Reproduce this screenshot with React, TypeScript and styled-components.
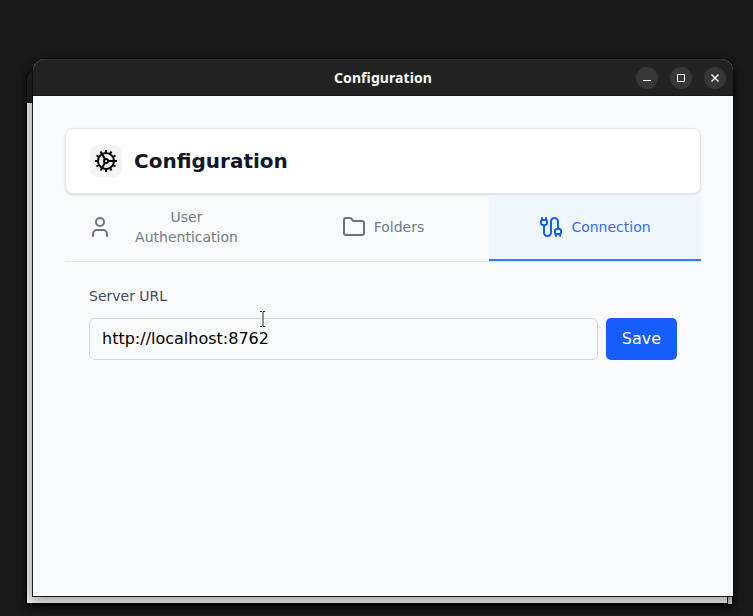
import React from "react";
import styled, { createGlobalStyle } from "styled-components";
import { Cable, Folder, User } from "lucide-react";

const GlobalStyle = createGlobalStyle`
  *, *::before, *::after { box-sizing: border-box; }
  body { margin: 0; background: #1b1b1b; overflow: hidden; }
  button, input { font: inherit; }
`;

const Desktop = styled.main`
  position: relative;
  width: 753px;
  height: 616px;
  overflow: hidden;
  background: #1b1b1b;
  font-family: "DejaVu Sans", sans-serif;
`;

const BackWindow = styled.div<{ $left: number; $width: number; $bottom: number }>`
  position: absolute;
  left: ${(p) => p.$left}px;
  top: 68px;
  width: ${(p) => p.$width}px;
  bottom: ${(p) => p.$bottom}px;
  border-radius: 12px 12px 0 0;
  background: linear-gradient(#202020 35px, #f4f4f4 35px);
  box-shadow: 0 0 0 1px #050505, 0 3px 10px 2px rgba(0, 0, 0, 0.45);
`;

const Window = styled.section`
  position: absolute;
  left: 33px;
  top: 59px;
  width: 700px;
  height: 537px;
  display: flex;
  flex-direction: column;
  border-radius: 12px 12px 0 0;
  background: #f9fafb;
  box-shadow: 0 0 0 1px rgba(12, 12, 16, 0.9), 0 3px 14px 3px rgba(0, 0, 0, 0.35);
`;

const TitleBar = styled.header`
  display: grid;
  grid-template-columns: 1fr auto 1fr;
  align-items: center;
  flex: none;
  height: 37px;
  padding-right: 7px;
  padding-left: 7px;
  border-radius: 12px 12px 0 0;
  background: #222;
  box-shadow: inset 0 1px #333, inset 0 -1px #1a1a1a;
`;

const WindowTitle = styled.span`
  grid-column: 2;
  color: #f7f7f7;
  font: 700 14px/20px "Noto Sans", sans-serif;
  letter-spacing: 0.08px;
`;

const WindowControls = styled.div`
  display: flex;
  justify-content: flex-end;
  gap: 12px;
`;

const ControlButton = styled.button`
  display: grid;
  place-items: center;
  width: 22px;
  height: 22px;
  padding: 0;
  border: 0;
  border-radius: 50%;
  background: #373737;
  color: #fff;
`;

const Page = styled.div`
  flex: 1;
  padding: 32px;
  background: #f9fafc;
`;

const PageHeader = styled.div`
  display: flex;
  align-items: center;
  gap: 12px;
  height: 66px;
  padding: 0 24px;
  border: 1px solid #e5e7eb;
  border-radius: 8px;
  background: #fff;
  box-shadow: 0 1px 0 #e3e4e8, 0 1px 3px rgba(0, 0, 0, 0.1), 0 1px 2px -1px rgba(0, 0, 0, 0.1);
`;

const IconTile = styled.div`
  display: grid;
  place-items: center;
  width: 32px;
  height: 32px;
  border-radius: 8px;
  background: #f3f4f6;
  color: #000;
`;

const Heading = styled.h1`
  margin: 0;
  color: #101828;
  font-size: 20px;
  line-height: 28px;
  font-weight: 700;
`;

const Tabs = styled.nav`
  display: grid;
  grid-template-columns: repeat(3, 1fr);
  height: 67px;
  margin-top: 1px;
  border-bottom: 1px solid #e5e7eb;
`;

const Tab = styled.button<{ $active?: boolean }>`
  display: flex;
  align-items: center;
  justify-content: center;
  gap: 8px;
  padding: 0 24px;
  border: 0;
  border-bottom: 2px solid ${(p) => (p.$active ? "#2b7fff" : "transparent")};
  background: ${(p) => (p.$active ? "#eff6ff" : "transparent")};
  color: ${(p) => (p.$active ? "#155dfc" : "#6a7282")};
  font-size: 14px;
  line-height: 20px;
  svg { flex: none; }

  &:first-child {
    gap: 9px;
    padding: 0 25px 0 23px;
  }
`;

const TabLabel = styled.span<{ $active?: boolean }>`
  color: ${(p) => (p.$active ? "#3a6cfa" : "#747b87")};
`;

const Form = styled.form`
  padding: 24px;
`;

const Label = styled.label`
  display: block;
  margin-bottom: 12px;
  color: #434c5b;
  font-size: 14px;
  line-height: 20px;
`;

const FieldRow = styled.div`
  display: flex;
  gap: 8px;
`;

const TextInput = styled.input`
  flex: 1;
  min-width: 0;
  height: 42px;
  padding: 7px 12px 9px;
  border: 1px solid #d1d5dc;
  border-radius: 6px;
  outline: 0;
  background: transparent;
  color: #000;
  font-size: 16px;
  line-height: 24px;
`;

const SaveButton = styled.button`
  width: 71px;
  height: 42px;
  padding: 0;
  border: 0;
  border-radius: 5px;
  background: #155dfc;
  color: #fff;
  font-size: 16px;
  line-height: 24px;
`;

const TextCursor = styled.svg`
  position: absolute;
  left: 258px;
  top: 310px;
`;

const TOOTH_ANGLES = [0, 30, 60, 90, 120, 150, 180, 210, 240, 270, 300, 330];
const SPOKE_ANGLES = [0, 120, 240];

function GearIcon() {
  return (
    <svg width="24" height="24" viewBox="0 0 24 24" fill="none" stroke="currentColor" strokeWidth="2">
      <circle cx="12" cy="12" r="8" />
      <circle cx="12" cy="12" r="2" />
      {TOOTH_ANGLES.map((angle) => (
        <path key={angle} d="M20 12h3" transform={`rotate(${angle} 12 12)`} />
      ))}
      {SPOKE_ANGLES.map((angle) => (
        <path key={angle} d="M14 12h6" transform={`rotate(${angle} 12 12)`} />
      ))}
    </svg>
  );
}

export default function App() {
  return (
    <>
      <GlobalStyle />
      <Desktop>
        <BackWindow $left={33} $width={699} $bottom={12} />
        <BackWindow $left={27} $width={700} $bottom={13} />
        <Window>
          <TitleBar>
            <WindowTitle>Configuration</WindowTitle>
            <WindowControls>
              <ControlButton aria-label="Minimize">
                <svg width="10" height="10" viewBox="0 0 10 10">
                  <path d="M1 7.5h8" stroke="currentColor" />
                </svg>
              </ControlButton>
              <ControlButton aria-label="Maximize">
                <svg width="8" height="8" viewBox="0 0 8 8">
                  <path d="M.5.5h7v7h-7z" fill="none" stroke="currentColor" />
                </svg>
              </ControlButton>
              <ControlButton aria-label="Close">
                <svg width="8" height="8" viewBox="0 0 8 8">
                  <path d="M.5.5l7 7m0-7l-7 7" stroke="currentColor" strokeWidth="1.4" />
                </svg>
              </ControlButton>
            </WindowControls>
          </TitleBar>
          <Page>
            <PageHeader>
              <IconTile>
                <GearIcon />
              </IconTile>
              <Heading>Configuration</Heading>
            </PageHeader>
            <Tabs>
              <Tab>
                <User size={24} />
                <TabLabel>User Authentication</TabLabel>
              </Tab>
              <Tab>
                <Folder size={24} />
                <TabLabel>Folders</TabLabel>
              </Tab>
              <Tab $active>
                <Cable size={24} />
                <TabLabel $active>Connection</TabLabel>
              </Tab>
            </Tabs>
            <Form>
              <Label htmlFor="server-url">Server URL</Label>
              <FieldRow>
                <TextInput id="server-url" defaultValue="http://localhost:8762" />
                <SaveButton type="button">Save</SaveButton>
              </FieldRow>
            </Form>
          </Page>
        </Window>
        <TextCursor width="10" height="18" viewBox="0 0 10 18" fill="none">
          <path d="M1 1.5h8M1 16.5h8M5 1.5v15" stroke="#fff" strokeWidth="3" />
          <path d="M2 1.5h2M5 1.5h2M2 16.5h2M5 16.5h2M5 2v14" stroke="#222" />
        </TextCursor>
      </Desktop>
    </>
  );
}
